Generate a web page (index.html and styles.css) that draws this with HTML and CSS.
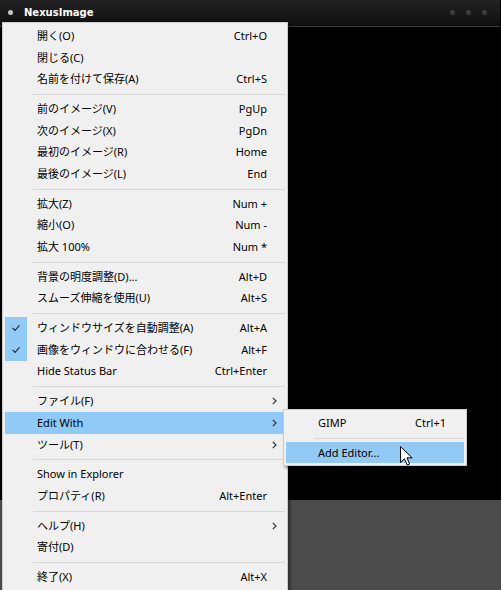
FILE: index.html
```html
<!DOCTYPE html>
<html lang="ja">
<head>
<meta charset="utf-8">
<title>NexusImage</title>
<link rel="stylesheet" href="styles.css">
</head>
<body>
<div class="window">
  <div class="titlebar">
    <span class="app-dot"></span>
    <span class="title">NexusImage</span>
    <div class="ctrls"><i></i><i></i><i></i></div>
  </div>
  <div class="viewport"></div>
  <div class="statusbar"></div>

  <div class="menu main-menu">
    <div class="item"><span class="chk"></span><span class="lbl">開く(O)</span><span class="key">Ctrl+O</span><span class="arr"></span></div>
    <div class="item"><span class="chk"></span><span class="lbl">閉じる(C)</span><span class="key"></span><span class="arr"></span></div>
    <div class="item"><span class="chk"></span><span class="lbl">名前を付けて保存(A)</span><span class="key">Ctrl+S</span><span class="arr"></span></div>
    <div class="sep"></div>
    <div class="item"><span class="chk"></span><span class="lbl">前のイメージ(V)</span><span class="key">PgUp</span><span class="arr"></span></div>
    <div class="item"><span class="chk"></span><span class="lbl">次のイメージ(X)</span><span class="key">PgDn</span><span class="arr"></span></div>
    <div class="item"><span class="chk"></span><span class="lbl">最初のイメージ(R)</span><span class="key">Home</span><span class="arr"></span></div>
    <div class="item"><span class="chk"></span><span class="lbl">最後のイメージ(L)</span><span class="key">End</span><span class="arr"></span></div>
    <div class="sep"></div>
    <div class="item"><span class="chk"></span><span class="lbl">拡大(Z)</span><span class="key">Num +</span><span class="arr"></span></div>
    <div class="item"><span class="chk"></span><span class="lbl">縮小(O)</span><span class="key">Num -</span><span class="arr"></span></div>
    <div class="item"><span class="chk"></span><span class="lbl">拡大 100%</span><span class="key">Num *</span><span class="arr"></span></div>
    <div class="sep"></div>
    <div class="item"><span class="chk"></span><span class="lbl">背景の明度調整(D)...</span><span class="key">Alt+D</span><span class="arr"></span></div>
    <div class="item"><span class="chk"></span><span class="lbl">スムーズ伸縮を使用(U)</span><span class="key">Alt+S</span><span class="arr"></span></div>
    <div class="sep"></div>
    <div class="item"><span class="chk on"><svg viewBox="0 0 10 8" width="10" height="8"><polyline points="1.5,3.8 4,6.3 8.5,1.3" /></svg></span><span class="lbl">ウィンドウサイズを自動調整(A)</span><span class="key">Alt+A</span><span class="arr"></span></div>
    <div class="item"><span class="chk on"><svg viewBox="0 0 10 8" width="10" height="8"><polyline points="1.5,3.8 4,6.3 8.5,1.3" /></svg></span><span class="lbl">画像をウィンドウに合わせる(F)</span><span class="key">Alt+F</span><span class="arr"></span></div>
    <div class="item"><span class="chk"></span><span class="lbl">Hide Status Bar</span><span class="key">Ctrl+Enter</span><span class="arr"></span></div>
    <div class="sep"></div>
    <div class="item"><span class="chk"></span><span class="lbl">ファイル(F)</span><span class="key"></span><span class="arr"><svg viewBox="0 0 5 8" width="5" height="8"><polyline points="0.8,0.8 4,4 0.8,7.2" /></svg></span></div>
    <div class="item active"><span class="chk"></span><span class="lbl">Edit With</span><span class="key"></span><span class="arr"><svg viewBox="0 0 5 8" width="5" height="8"><polyline points="0.8,0.8 4,4 0.8,7.2" /></svg></span></div>
    <div class="item"><span class="chk"></span><span class="lbl">ツール(T)</span><span class="key"></span><span class="arr"><svg viewBox="0 0 5 8" width="5" height="8"><polyline points="0.8,0.8 4,4 0.8,7.2" /></svg></span></div>
    <div class="sep"></div>
    <div class="item"><span class="chk"></span><span class="lbl">Show in Explorer</span><span class="key"></span><span class="arr"></span></div>
    <div class="item"><span class="chk"></span><span class="lbl">プロパティ(R)</span><span class="key">Alt+Enter</span><span class="arr"></span></div>
    <div class="sep"></div>
    <div class="item"><span class="chk"></span><span class="lbl">ヘルプ(H)</span><span class="key"></span><span class="arr"><svg viewBox="0 0 5 8" width="5" height="8"><polyline points="0.8,0.8 4,4 0.8,7.2" /></svg></span></div>
    <div class="item"><span class="chk"></span><span class="lbl">寄付(D)</span><span class="key"></span><span class="arr"></span></div>
    <div class="sep"></div>
    <div class="item"><span class="chk"></span><span class="lbl">終了(X)</span><span class="key">Alt+X</span><span class="arr"></span></div>
  </div>

  <div class="menu sub-menu">
    <div class="item"><span class="chk"></span><span class="lbl">GIMP</span><span class="key">Ctrl+1</span><span class="arr"></span></div>
    <div class="sep"></div>
    <div class="item active"><span class="chk"></span><span class="lbl">Add Editor...</span><span class="key"></span><span class="arr"></span></div>
  </div>

  <svg class="cursor" viewBox="0 0 13 20" width="13" height="20">
    <path d="M0.5,0.5 L0.5,16.5 L4.5,12.8 L7.2,19 L9.6,18 L7,11.8 L12.2,11.8 Z" />
  </svg>
</div>
</body>
</html>
```

FILE: styles.css
```css
* { box-sizing: border-box; }

html, body {
  margin: 0;
  padding: 0;
  width: 501px;
  height: 590px;
  overflow: hidden;
  background: #000;
}

.window {
  position: relative;
  width: 501px;
  height: 590px;
  display: flex;
  flex-direction: column;
  font-family: "Noto Sans", "Noto Sans CJK JP", sans-serif;
}

.titlebar {
  height: 27px;
  flex: none;
  display: flex;
  align-items: center;
  padding: 0 0 1px 8px;
  background: linear-gradient(#232323, #0e0e0e);
  border-bottom: 1px solid #3a3a3a;
  margin-right: 1px;
}

.app-dot {
  width: 5px;
  height: 5px;
  border-radius: 50%;
  background: #c8c8c8;
  margin-right: 11px;
}

.title {
  font-family: "DejaVu Sans", sans-serif;
  font-weight: bold;
  font-size: 10px;
  color: #fff;
}

.ctrls {
  margin-left: auto;
  display: flex;
  gap: 11px;
  padding-right: 13px;
}

.ctrls i {
  display: block;
  width: 5px;
  height: 5px;
  border-radius: 50%;
  background: #3d3d3d;
}

.viewport {
  flex: 1;
  background: #000;
}

.statusbar {
  height: 90px;
  flex: none;
  background: #4b4b4b;
}

.menu {
  position: absolute;
  background: #f0f0f0;
  border: 1px solid #cccccc;
  padding: 2px;
  box-shadow: 2px 2px 3px rgba(0, 0, 0, 0.45);
  font-size: 11px;
  color: #000;
}

.main-menu {
  left: 2px;
  top: 22px;
  width: 286px;
}

.sub-menu {
  left: 283px;
  top: 409px;
  width: 184px;
}

.item {
  display: grid;
  grid-template-columns: 22px 1fr auto 18px;
  align-items: center;
  height: 21.7px;
  line-height: 14px;
  white-space: nowrap;
}

.item.active {
  background: #91c9f7;
}

.chk {
  align-self: stretch;
  display: flex;
  align-items: center;
  justify-content: center;
}

.chk.on {
  background: #91c9f7;
}

.chk svg polyline {
  fill: none;
  stroke: #2b2b2b;
  stroke-width: 1.2;
}

.lbl {
  padding-left: 10px;
}

.key {
  text-align: right;
}

.arr {
  display: flex;
  align-items: center;
  padding-left: 5px;
}

.arr svg polyline {
  fill: none;
  stroke: #333;
  stroke-width: 1.2;
}

.sep {
  height: 8px;
  padding: 4px 0 3px 28px;
}

.sep::before {
  content: "";
  display: block;
  height: 1px;
  background: #d7d7d7;
}

.cursor {
  position: absolute;
  left: 400px;
  top: 446px;
}

.cursor path {
  fill: #fff;
  stroke: #000;
  stroke-width: 1;
  stroke-linejoin: miter;
}
```
